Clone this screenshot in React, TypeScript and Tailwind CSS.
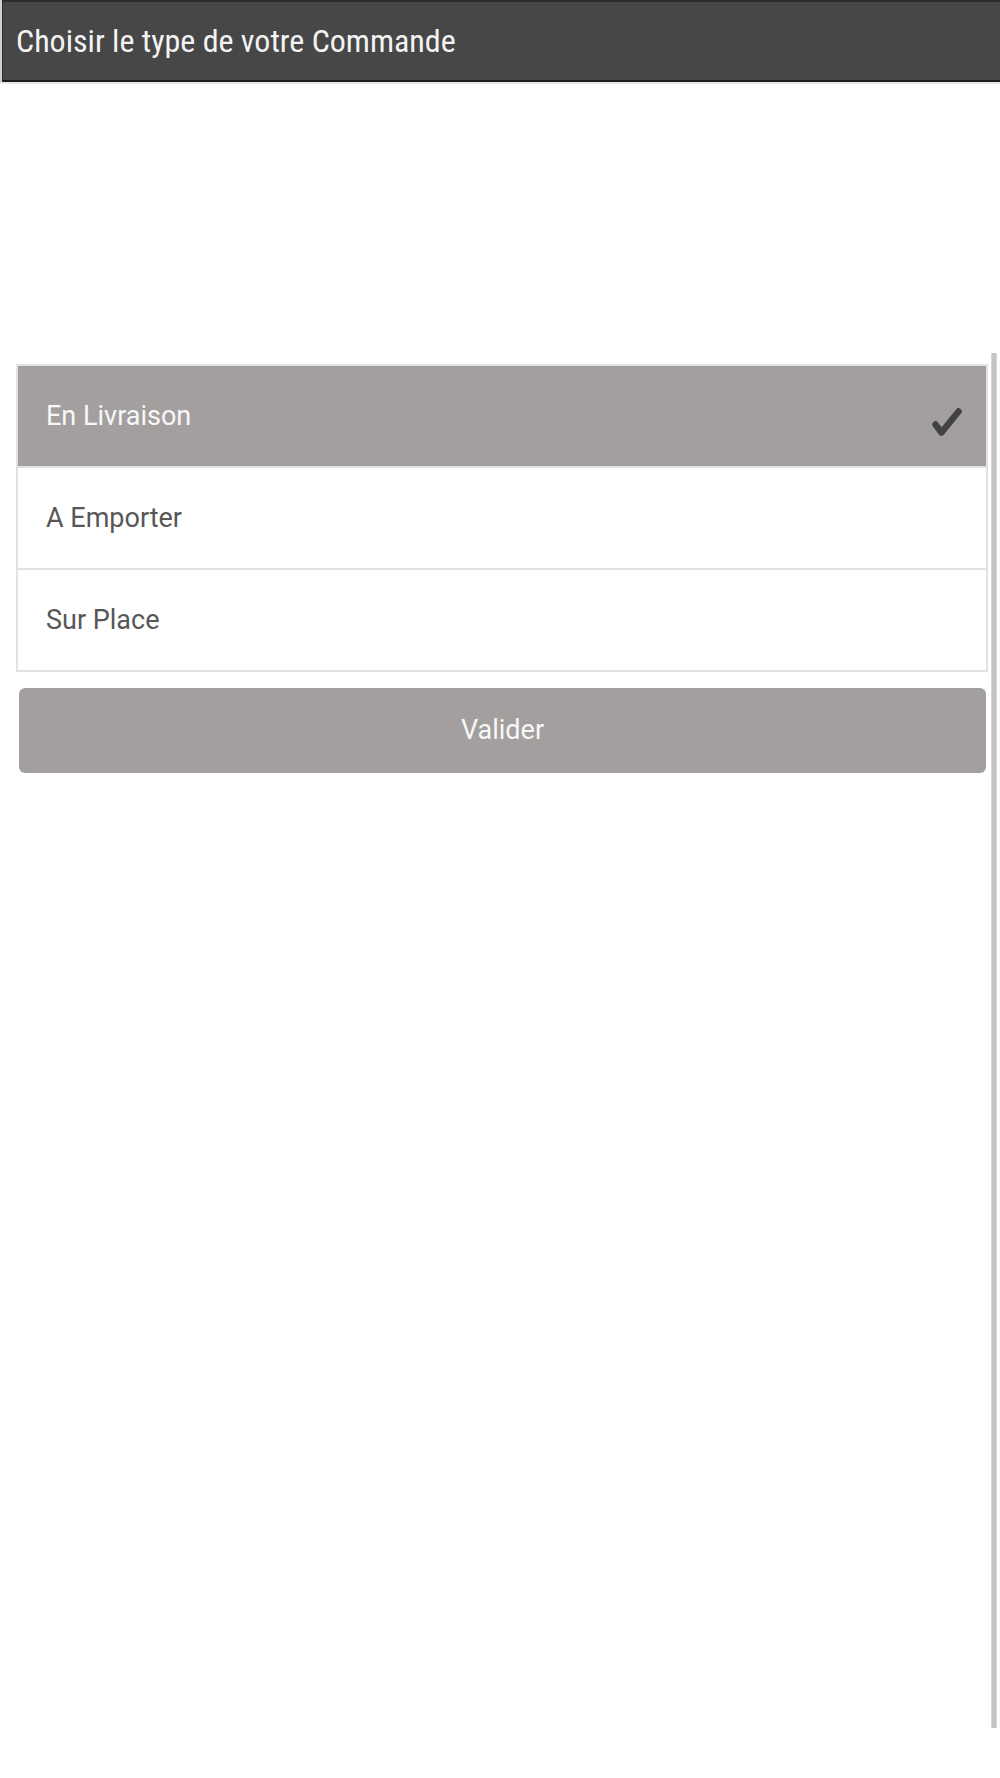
import React from "react";

const options = [
    { label: "En Livraison", selected: true },
    { label: "A Emporter", selected: false },
    { label: "Sur Place", selected: false },
];

const CheckMark = () => (
    <svg width="32" height="32" viewBox="0 0 32 32" className="mt-3 mr-[23px] shrink-0">
        <polyline
            points="4.5,18.5 10.5,26.5 27.5,5.5"
            fill="none"
            stroke="#424242"
            strokeWidth="6.5"
            strokeLinecap="round"
            strokeLinejoin="round"
        />
    </svg>
);

const App = () => {
    return (
        <div className="w-[1000px] h-[1778px] bg-white font-['Roboto','Liberation_Sans',sans-serif]">
            {/* action bar */}
            <div className="border-l-2 border-[#cfcfcf]">
                <div className="h-[82px] flex items-center bg-[#474747] border-t-2 border-b-2 border-l border-t-[#2c2c2c] border-b-[#1c1c1c] border-l-[#2c2c2c] pl-[13px]">
                    <h1 className="text-[32px] leading-none text-[#f4f4f4] font-['Roboto_Condensed','Roboto',sans-serif]">
                        Choisir le type de votre Commande
                    </h1>
                </div>
            </div>
            <div className="h-[2px] bg-[#e9e9e9]" />

            <div className="mt-[269px] flex h-[1375px]">
                <div className="w-[988px] pt-[11px] pl-4">
                    <ul className="border-2 border-[#e2e2e2]">
                        {options.map((opt, i) => (
                            <li
                                key={opt.label}
                                className={
                                    "flex items-center justify-between pl-[28px] text-[27px] " +
                                    (i < options.length - 1 ? "h-[102px] border-b-2 border-[#e2e2e2] " : "h-[100px] ") +
                                    (opt.selected ? "bg-[#a39f9e] text-[#f7f7f7]" : "bg-white text-[#575757]")
                                }
                            >
                                <span>{opt.label}</span>
                                {opt.selected && <CheckMark />}
                            </li>
                        ))}
                    </ul>
                    <button className="mt-4 ml-[3px] w-[967px] h-[85px] rounded-[6px] bg-[#a39f9e] text-[27px] text-[#f7f7f7]">
                        Valider
                    </button>
                </div>
                <div className="ml-[3px] w-[6px] h-full bg-[#c4c4c4] border-x border-[#d6d6d6]" />
            </div>
        </div>
    );
};

export default App;
